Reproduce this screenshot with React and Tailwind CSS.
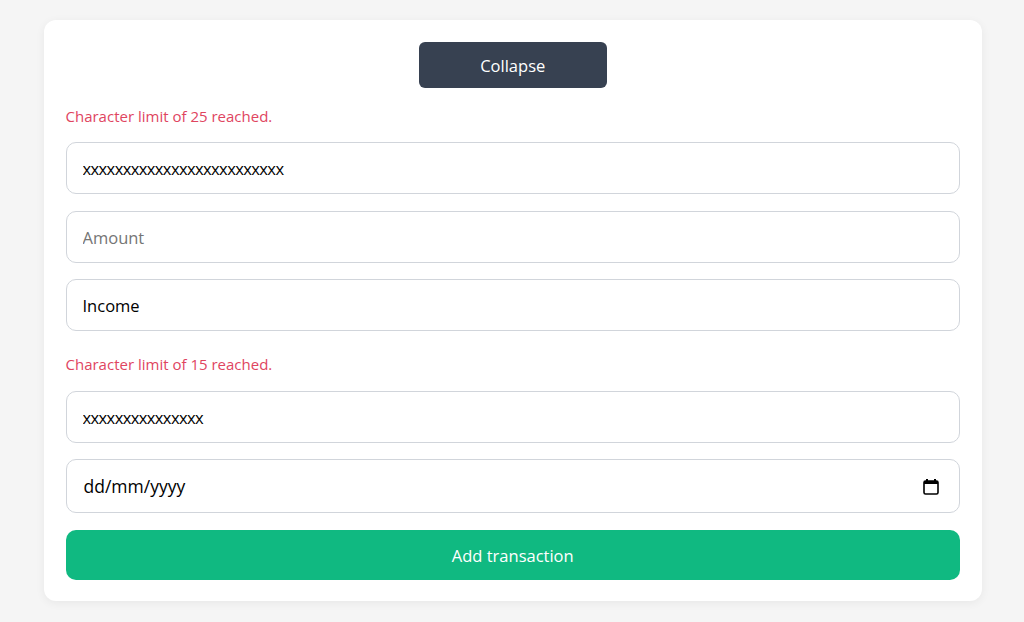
import React from "react";

const Field = ({ value, placeholder, className = "" }) => (
  <input
    readOnly
    value={value}
    placeholder={placeholder}
    className={`w-full h-[52px] px-4 border border-[#d1d5db] rounded-[10px] bg-white text-[16.5px] text-black placeholder:text-[#757575] outline-none ${className}`}
  />
);

const Limit = ({ children, className }) => (
  <p className={`h-6 leading-6 text-[15px] text-[#e0455f] ${className}`}>{children}</p>
);

export default function App() {
  return (
    <div className="min-h-screen bg-[#f5f5f5] pt-5 pb-5 pl-[44px] pr-[42px] font-['Open_Sans',sans-serif]">
      <div className="h-[581px] bg-white rounded-xl shadow-[0_2px_10px_rgba(0,0,0,0.06)] pl-[21.5px] pr-[22px] pt-[22px]">
        {/* COLLAPSE */}
        <div className="flex justify-center">
          <button className="w-[188px] h-[46px] pt-[2px] rounded-md bg-[#374151] text-white text-[16.5px]">
            Collapse
          </button>
        </div>

        <Limit className="mt-4 mb-[14px]">Character limit of 25 reached.</Limit>

        {/* FORM */}
        <div className="flex flex-col gap-4">
          <Field value="xxxxxxxxxxxxxxxxxxxxxxxxx" className="mb-px pt-px tracking-[-0.6px]" />
          <Field value="" placeholder="Amount" />
          <Field value="Income" />
        </div>

        <Limit className="mt-[21px] mb-[15px]">Character limit of 15 reached.</Limit>

        <div className="flex flex-col gap-4">
          <Field value="xxxxxxxxxxxxxxx" className="tracking-[-0.6px]" />
          <div className="flex items-center justify-between h-[54px] pt-px pl-[17px] pr-5 border border-[#d1d5db] rounded-[10px] text-[17.5px] text-black">
            <span>dd/mm/yyyy</span>
            <svg width="16" height="16" viewBox="0 0 16 16" fill="none">
              <path d="M4 0v2M12 0v2" stroke="#000" strokeWidth="2" />
              <path d="M1 3a1 1 0 0 1 1-1h12a1 1 0 0 1 1 1v2H1z" fill="#000" />
              <rect x="1" y="2" width="14" height="13" rx="1.5" stroke="#000" strokeWidth="1.6" />
            </svg>
          </div>
          <button className="w-full h-[50px] mt-px pt-[2px] rounded-[10px] bg-[#10b981] text-white text-[16.5px]">
            Add transaction
          </button>
        </div>
      </div>
    </div>
  );
}
